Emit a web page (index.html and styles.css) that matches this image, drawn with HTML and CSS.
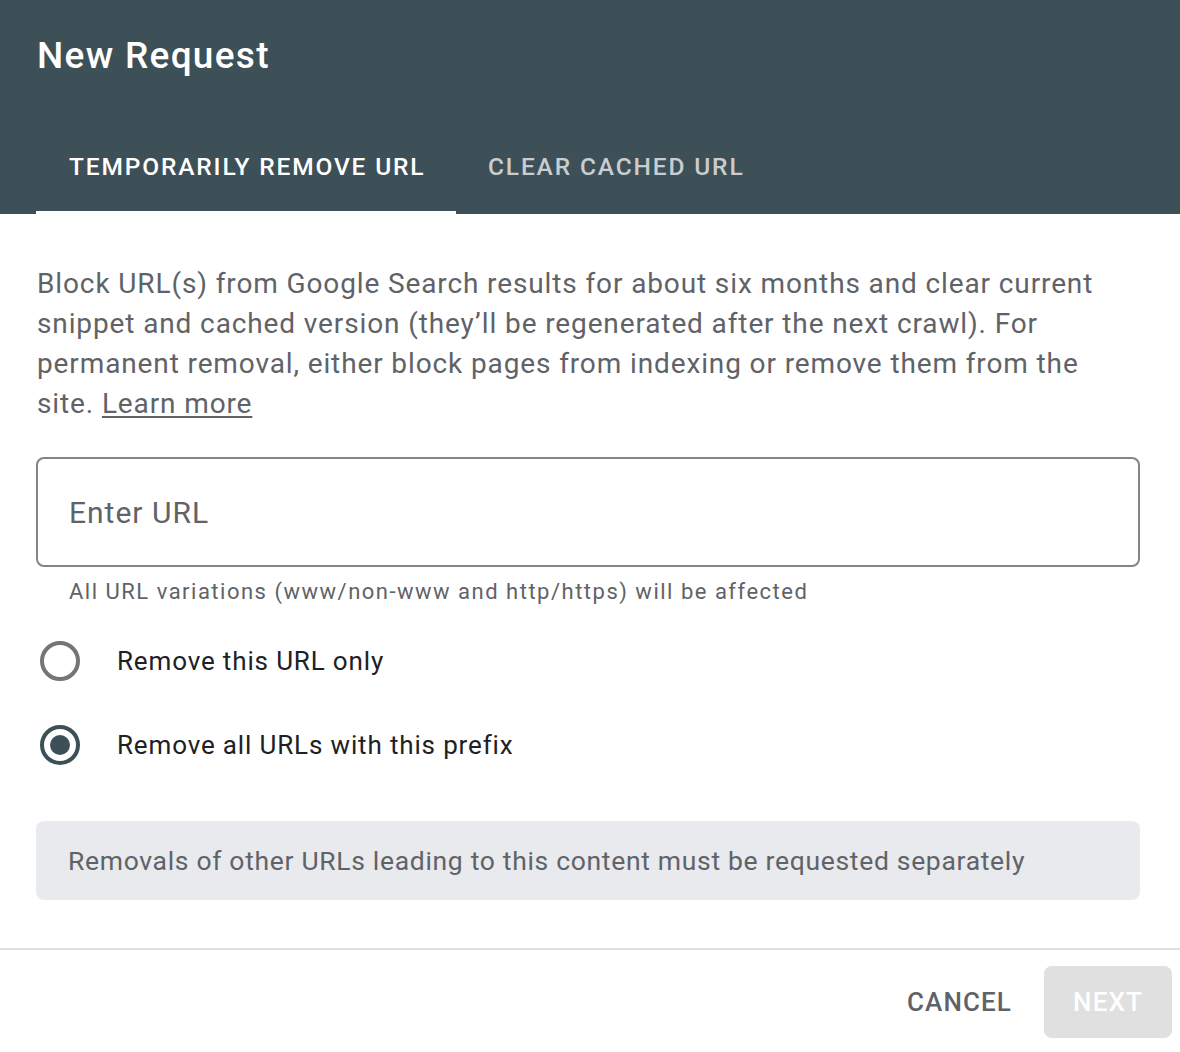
FILE: index.html
```html
<!DOCTYPE html>
<html>
<head>
<meta charset="utf-8">
<link rel="stylesheet" href="styles.css">
</head>
<body>
<div class="dialog">
  <header class="head">
    <h1 class="title">New Request</h1>
    <nav class="tabs">
      <div class="tab active">TEMPORARILY REMOVE URL</div>
      <div class="tab">CLEAR CACHED URL</div>
    </nav>
  </header>
  <main class="content">
    <p class="desc">Block URL(s) from Google Search results for about six months and clear current snippet and cached version (they’ll be regenerated after the next crawl). For permanent removal, either block pages from indexing or remove them from the site. <a class="link" href="#">Learn more</a></p>
    <div class="field"><span class="placeholder">Enter URL</span></div>
    <div class="hint">All URL variations (www/non-www and http/https) will be affected</div>
    <div class="radios">
      <label class="radio"><span class="circle"></span><span class="rlabel">Remove this URL only</span></label>
      <label class="radio"><span class="circle checked"></span><span class="rlabel">Remove all URLs with this prefix</span></label>
    </div>
    <div class="note">Removals of other URLs leading to this content must be requested separately</div>
  </main>
  <footer class="actions">
    <button class="btn cancel">CANCEL</button>
    <button class="btn next">NEXT</button>
  </footer>
</div>
</body>
</html>
```
FILE: styles.css
```css
html, body { margin: 0; padding: 0; background: #fff; }
body { font-family: Roboto, "Noto Sans", Arial, sans-serif; width: 1180px; height: 1052px; overflow: hidden; }
.dialog { display: flex; flex-direction: column; }
.head { background: #3d5058; height: 214px; display: flex; flex-direction: column; }
.title { margin: 0; padding: 31px 0 0 37px; height: 57px; font-size: 37px; font-weight: 500; color: #fff; line-height: 50px; letter-spacing: 1.3px; }
.tabs { display: flex; margin-top: auto; padding-left: 36px; }
.tab { font-size: 24.5px; font-weight: 500; letter-spacing: 1.85px; color: #c9cdcf; padding: 0 32px; height: 94px; line-height: 94px; box-sizing: border-box; border-bottom: 3px solid transparent; white-space: nowrap; }
.tab.active { color: #fff; border-bottom-color: #fff; width: 420px; padding-left: 33px; }
.content { padding: 0 40px 0 36px; }
.desc { margin: 0; padding-top: 50px; font-size: 28px; line-height: 40px; color: #5f6368; padding-left: 1px; letter-spacing: 0.88px; }
.link { color: #5f6368; text-decoration: underline; text-underline-offset: 3px; text-decoration-thickness: 2px; }
.field { margin-top: 33px; height: 110px; box-sizing: border-box; border: 2px solid #80868b; border-radius: 8px; display: flex; align-items: center; padding-left: 31px; }
.placeholder { font-size: 30px; color: #5f6368; letter-spacing: 1px; }
.hint { padding-left: 33px; margin-top: 10px; font-size: 22px; line-height: 30px; color: #5f6368; letter-spacing: 1.5px; }
.radios { display: flex; flex-direction: column; margin-top: 34px; gap: 44px; }
.radio { display: flex; align-items: center; height: 40px; }
.circle { width: 40px; height: 40px; box-sizing: border-box; border: 4px solid #757575; border-radius: 50%; margin-left: 4px; display: flex; align-items: center; justify-content: center; }
.circle.checked { border-color: #3d5058; }
.circle.checked::after { content: ""; width: 20px; height: 20px; border-radius: 50%; background: #3d5058; }
.rlabel { margin-left: 37px; font-size: 26px; color: #202124; letter-spacing: 0.85px; }
.note { margin-top: 56px; height: 79px; background: #e8eaed; border-radius: 8px; display: flex; align-items: center; padding-left: 32px; font-size: 26.5px; color: #5f6368; letter-spacing: 0.68px; }
.actions { margin-top: 48px; border-top: 2px solid #e0e0e0; display: flex; justify-content: flex-end; align-items: center; padding: 16px 8px 0 0; gap: 16px; }
.btn { font-family: Roboto, "Noto Sans", Arial, sans-serif; font-size: 26px; font-weight: 500; letter-spacing: 1.1px; border: none; border-radius: 8px; height: 72px; padding: 0 16px; background: transparent; }
.cancel { color: #5f6368; }
.next { background: #e0e0e0; color: #fff; width: 128px; }
```
